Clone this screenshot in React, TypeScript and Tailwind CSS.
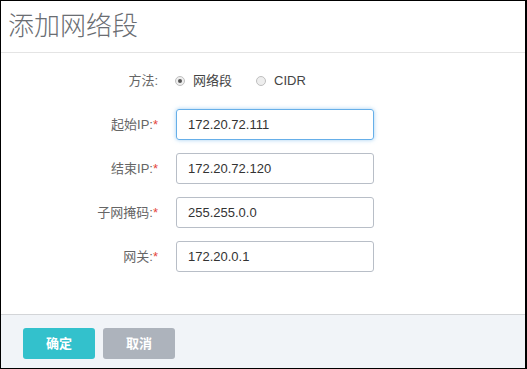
import React from "react";

const font = { fontFamily: '"Liberation Sans", Arial, "Noto Sans CJK SC", sans-serif' };

type FieldProps = { label: string; value: string; focused?: boolean };

const Label = ({ text, required }: { text: string; required?: boolean }) => (
  <div className="w-[157px] shrink-0 text-right text-[13px] text-[#666]">
    {text}
    {required && <span className="text-[#e5473c]">*</span>}
  </div>
);

function Field({ label, value, focused }: FieldProps) {
  return (
    <div className="flex h-[31px] items-center">
      <Label text={label} required />
      <input
        readOnly
        value={value}
        className={
          focused
            ? "ml-[18px] h-[31px] w-[198px] rounded-[3px] border border-[#66afe9] px-[11px] text-[13px] text-[#333] shadow-[0_0_4px_rgba(102,175,233,0.6)] outline-none"
            : "ml-[18px] h-[31px] w-[198px] rounded-[3px] border border-[#b8bec7] px-[11px] text-[13px] text-[#333] outline-none"
        }
        style={font}
      />
    </div>
  );
}

const Radio = ({ checked, text }: { checked?: boolean; text: string }) => (
  <label className="flex items-center">
    <span className="flex h-[10px] w-[10px] items-center justify-center rounded-full border border-[#bfbfbf] bg-[#eeeeee]">
      {checked && <span className="h-[4px] w-[4px] rounded-full bg-[#555]" />}
    </span>
    <span className="ml-[8px] text-[13px] text-[#444]">{text}</span>
  </label>
);

export default function App() {
  return (
    <div
      className="flex h-[369px] w-[527px] flex-col border border-r-2 border-black bg-white"
      style={font}
    >
      <div className="flex h-[52px] shrink-0 items-center border-b border-[#e4e4e4] pl-[7px] text-[26px] font-light text-[#6a6d72]">
        添加网络段
      </div>
      <div className="flex flex-1 flex-col gap-[13px] pt-[12px]">
        <div className="flex h-[31px] items-center">
          <Label text="方法:" />
          <div className="ml-[17px] flex items-center gap-[24px]">
            <Radio checked text="网络段" />
            <Radio text="CIDR" />
          </div>
        </div>
        <Field label="起始IP:" value="172.20.72.111" focused />
        <Field label="结束IP:" value="172.20.72.120" />
        <Field label="子网掩码:" value="255.255.0.0" />
        <Field label="网关:" value="172.20.0.1" />
      </div>
      <div className="flex h-[54px] shrink-0 gap-[8px] border-t border-[#d3d5d8] bg-[#f1f4f8] pl-[22px] pt-[13px]">
        <button className="h-[31px] w-[72px] rounded-[3px] bg-[#33c1cc] text-[13px] font-semibold text-white">
          确定
        </button>
        <button className="h-[31px] w-[72px] rounded-[3px] bg-[#adb3bc] text-[13px] font-semibold text-white">
          取消
        </button>
      </div>
    </div>
  );
}
